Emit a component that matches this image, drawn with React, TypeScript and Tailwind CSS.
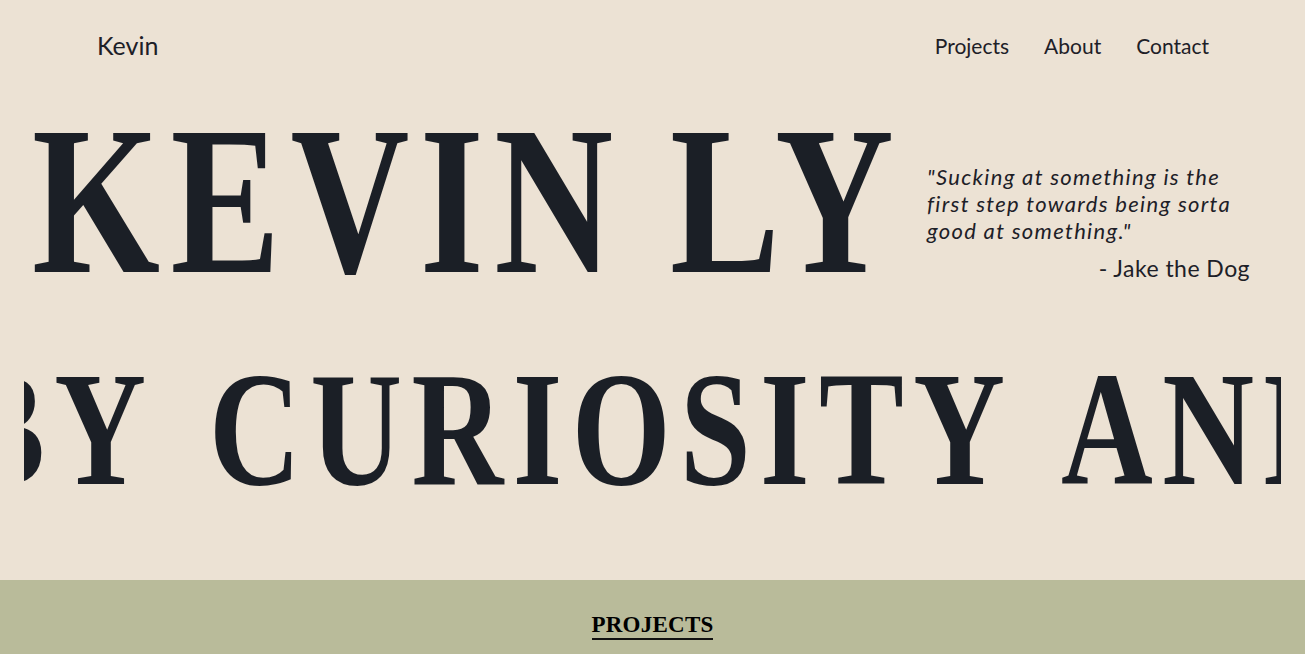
import React from "react";

const sans = { fontFamily: "Lato, 'Open Sans', sans-serif" };
const serif = { fontFamily: "'Liberation Serif', 'DejaVu Serif', serif" };

export default function App() {
  return (
    <div className="min-h-screen w-full bg-[#ece2d4] text-[#1d2027] overflow-hidden">
      <header className="flex h-[92px] items-center justify-between pl-[97px] pr-[96px]" style={sans}>
        <div className="text-[25px]">Kevin</div>
        <nav className="flex gap-[35px] text-[21px]">
          <a>Projects</a>
          <a>About</a>
          <a>Contact</a>
        </nav>
      </header>

      <section className="flex">
        <div className="w-[895px] shrink-0 pl-[32px] mt-[4px] overflow-visible">
          <h1
            className="origin-left scale-x-[0.78] whitespace-nowrap text-[211px] font-bold leading-none tracking-[0.063em] [word-spacing:-0.03em] text-[#1b1f26]"
            style={serif}
          >
            KEVIN LY
          </h1>
        </div>
        <div className="ml-[32px] w-[330px] pt-[71px]" style={sans}>
          <p className="italic text-[22px] leading-[27px] tracking-[0.06em] whitespace-nowrap">
            "Sucking at something is the
            <br />
            first step towards being sorta
            <br />
            good at something."
          </p>
          <p className="mt-[7px] pr-[7px] text-right text-[23px] tracking-[0.02em]">- Jake the Dog</p>
        </div>
      </section>

      <section className="mx-[24px] mt-[41px] overflow-hidden">
        <div
          className="ml-[-64px] origin-left scale-x-[0.78] whitespace-nowrap text-[163px] font-bold leading-none tracking-[0.074em] [word-spacing:22px] text-[#1b1f26]"
          style={serif}
        >
          BY CURIOSITY AND PASSION
        </div>
      </section>

      <section className="mt-[69px] h-[140px] bg-[#b9bb9a] pt-[32px] text-center">
        <h2
          className="inline-block border-b-2 border-[#111] text-[23px] font-bold leading-[26px] tracking-[0.01em] text-black"
          style={serif}
        >
          PROJECTS
        </h2>
      </section>
    </div>
  );
}
